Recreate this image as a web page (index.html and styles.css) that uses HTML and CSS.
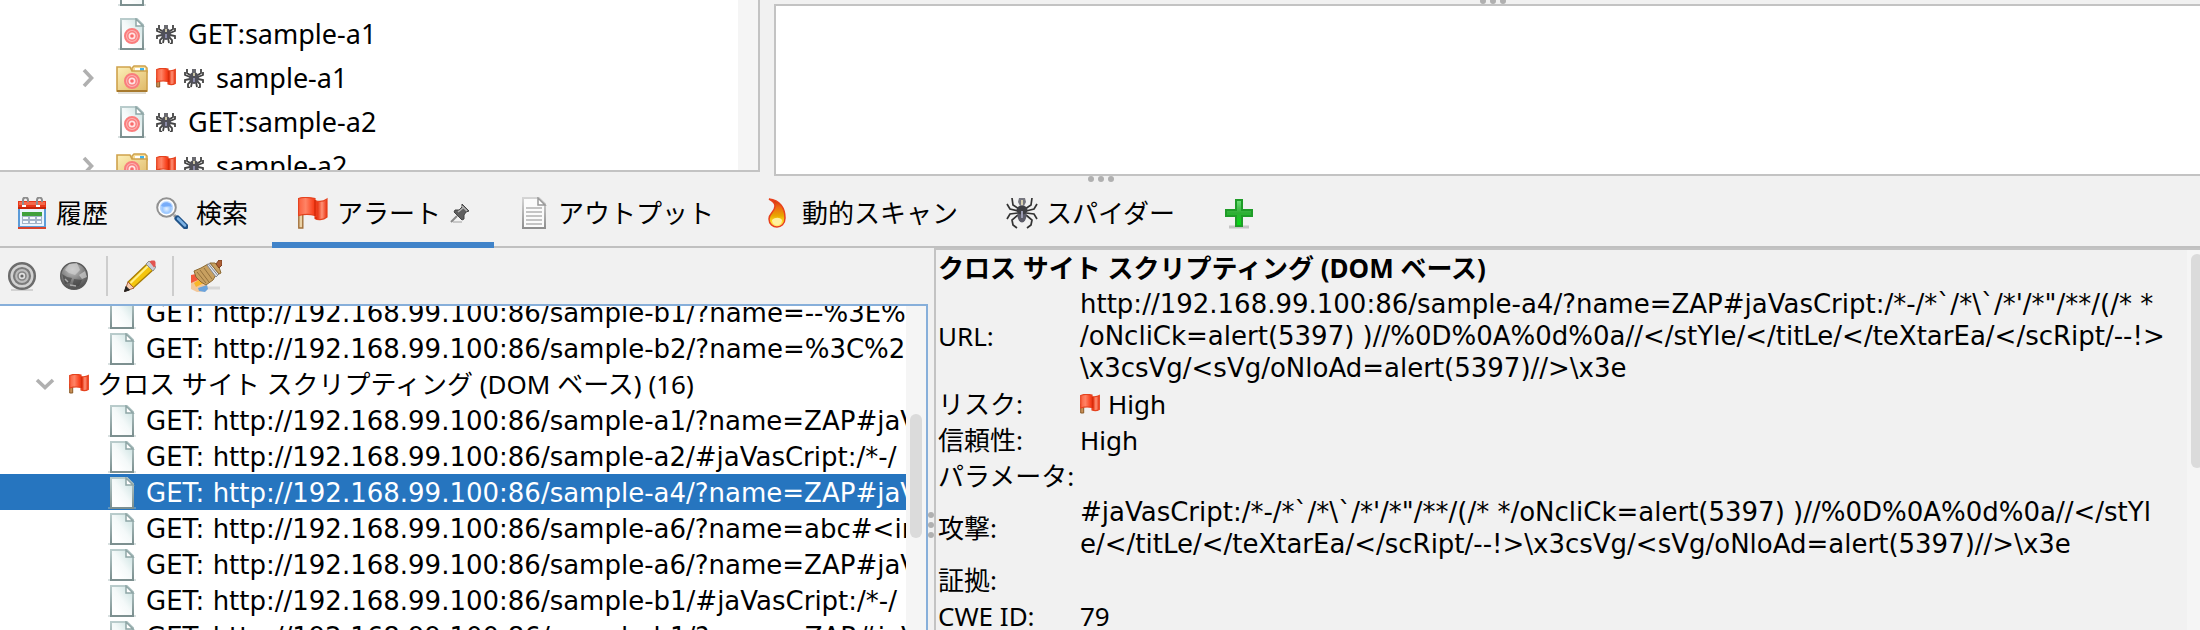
FILE: index.html
```html
<!DOCTYPE html>
<html lang="ja">
<head>
<meta charset="utf-8">
<title>アラート</title>
<link rel="stylesheet" href="styles.css">
</head>
<body>
<svg class="defs" aria-hidden="true">
  <defs>
    <linearGradient id="g-page" x1="1" y1="0" x2="0.2" y2="0.8"><stop offset="0" stop-color="#c4dedd"/><stop offset="0.6" stop-color="#f4f9f9"/><stop offset="1" stop-color="#fff"/></linearGradient>
    <linearGradient id="g-edge" x1="0" y1="0" x2="0" y2="1"><stop offset="0" stop-color="#b9cccc"/><stop offset="1" stop-color="#7a8e8e"/></linearGradient>
    <linearGradient id="g-grey" x1="0" y1="0" x2="0" y2="1"><stop offset="0" stop-color="#d4d4d4"/><stop offset="1" stop-color="#8f8f8f"/></linearGradient>
    <linearGradient id="g-folder" x1="0" y1="0" x2="1" y2="1"><stop offset="0" stop-color="#fdf0b8"/><stop offset="1" stop-color="#dfb968"/></linearGradient>
    <linearGradient id="g-flag" x1="0" y1="0" x2="1" y2="0"><stop offset="0" stop-color="#fb5f3d"/><stop offset="0.25" stop-color="#ff8466"/><stop offset="0.52" stop-color="#f9431f"/><stop offset="0.68" stop-color="#e83a18"/><stop offset="0.82" stop-color="#ff9175"/><stop offset="1" stop-color="#e9300f"/></linearGradient>
    <linearGradient id="g-fire" x1="0" y1="0" x2="0" y2="1"><stop offset="0" stop-color="#cc2a0a"/><stop offset="0.3" stop-color="#f06a12"/><stop offset="0.6" stop-color="#e8a800"/><stop offset="0.8" stop-color="#ffd820"/><stop offset="1" stop-color="#ffef8a"/></linearGradient>
    <linearGradient id="g-plus" x1="0" y1="0" x2="0" y2="1"><stop offset="0" stop-color="#6fe07a"/><stop offset="0.5" stop-color="#2fae35"/><stop offset="1" stop-color="#00e010"/></linearGradient>
    <radialGradient id="g-globe" cx="0.45" cy="0.25" r="0.8"><stop offset="0" stop-color="#c9c9c9"/><stop offset="0.5" stop-color="#858585"/><stop offset="1" stop-color="#454545"/></radialGradient>
    <radialGradient id="g-lens" cx="0.5" cy="0.6" r="0.6"><stop offset="0" stop-color="#e6f2ff"/><stop offset="0.5" stop-color="#9cc8ff"/><stop offset="1" stop-color="#d8e9ff"/></radialGradient>
  </defs>

  <symbol id="doc" viewBox="0 0 32 32">
    <path d="M2 31h28" stroke="#a9bcbc" stroke-width="2" opacity=".45"/>
    <path d="M5 1h16l6 6v24H5z" fill="url(#g-page)" stroke="url(#g-edge)" stroke-width="2"/>
    <path d="M5 31h22" stroke="#7d9090" stroke-width="2"/>
    <path d="M20 1v7h7z" fill="#fff" stroke="#8fa6a6" stroke-width="1.5"/>
  </symbol>
  <symbol id="ring" viewBox="0 0 16 16">
    <circle cx="8" cy="8" r="7" fill="#fbb3b3" stroke="#fa7d7d" stroke-width="2"/>
    <circle cx="8" cy="8" r="4.2" fill="#ffe3e3" stroke="#fa7d7d" stroke-width="1.4"/>
    <circle cx="8" cy="8" r="1.8" fill="#fa6a6a"/>
  </symbol>
  <symbol id="doc-target" viewBox="0 0 32 32">
    <use href="#doc" width="32" height="32"/><use href="#ring" x="8" y="10" width="16" height="16"/>
  </symbol>
  <symbol id="folder-target" viewBox="0 0 32 32">
    <path d="M2 31h28" stroke="#8a7a50" stroke-width="2" opacity=".25"/>
    <path d="M16 10V6l2-2h11l2 2v4z" fill="#f5dc98" stroke="#cfa24c" stroke-width="1.5"/>
    <path d="M19 6h10v3H19z" fill="#fff"/><path d="M24 6h4v3h-4z" fill="#3fb3ee"/>
    <path d="M1 5h13l2 4h15v20H1z" fill="url(#g-folder)" stroke="#cfa24c" stroke-width="1.6"/>
    <path d="M1 29h30" stroke="#a87a2e" stroke-width="2"/>
    <use href="#ring" x="8" y="11" width="16" height="16"/>
  </symbol>
  <symbol id="flag" viewBox="0 0 32 32">
    <path d="M2.800 13h4v18h-4z" fill="#ead2a6" stroke="#a2703a" stroke-width="1.4"/>
    <path d="M2.600 1.500C8-.5 13 .5 19 1.500v2c4 1.500 8 1.500 12-1.500v18c-4 3.500-10 3-12 1.500v-3c-5-1.500-11-1.500-16.400 0z" fill="url(#g-flag)" stroke="#e5431f" stroke-width="1.200"/>
    <path d="M19 3v16M20 20v2" stroke="#d92c0b" stroke-width="1.600"/>
  </symbol>
  <symbol id="flag-small" viewBox="0 0 20 20">
    <path d="M.7 10h3v9h-3z" fill="#c98f55" stroke="#8a5a28"/>
    <path d="M.7 1.500C4 0 7 0 12 1v1.500c3 .5 5 .5 7.300-1v14c-2.500 1.500-5 1.500-7.300.5v-2.500c-4-1-7-1-11.300.5z" fill="url(#g-flag)" stroke="#e5431f" stroke-width="1.200"/>
    <path d="M12.500 3v11" stroke="#d92c0b" stroke-width="1.600"/>
  </symbol>
  <symbol id="spider" viewBox="0 0 32 32">
    <g fill="none" stroke="#333" stroke-width="1.700">
      <path d="M13 12 7 8 6 1M19 12l6-4 1-7M12 14 4 12 1 7M20 14l8-2 3-5M12 16l-8 1-3 5M20 16l8 1 3 5M12 18l-6 5 1 5 4 3M20 18l6 5-1 5-4 3"/>
    </g>
    <ellipse cx="16" cy="18" rx="4.500" ry="7.500" fill="#5c5c68"/>
    <ellipse cx="16" cy="13" rx="5.500" ry="4.500" fill="#3e3e42"/>
    <path d="M13 1h6l1 4-2 4h-4l-2-4z" fill="#77777f"/>
    <path d="M15 3h2v5h-2z" fill="#d8d0b0"/>
    <path d="M15 14h2v7h-2z" fill="#9a9ab0"/>
  </symbol>
  <symbol id="spider-small" viewBox="0 0 20 20">
    <path d="M6 7 3 5V1M14 7l3-2V1M6 9 1 7V4M14 9l5-2V4M6 11l-5 1v3M14 11l5 1v3M7 13l-3 3v3l2 1M13 13l3 3v3l-2 1M8 14l-1 5M12 14l1 5" fill="none" stroke="#444" stroke-width="1.800"/>
    <ellipse cx="10" cy="10" rx="5" ry="6" fill="#505058"/>
    <path d="M8 1h4v4H8z" fill="#6b6b70"/><path d="M9 5h2v3H9z" fill="#c9c3a4"/><path d="M9 10h2v4H9z" fill="#8a8aa8"/>
  </symbol>
  <symbol id="calendar" viewBox="0 0 32 32">
    <path d="M3 9h26v21H3z" fill="#eaf4fd" stroke="#5b9bd8" stroke-width="2"/>
    <path d="M2 4h28v8H2z" fill="#e8391b"/><path d="M3 5h26v3H3z" fill="#f4694b"/><path d="M2 10h28v2H2z" fill="#c62508"/>
    <path d="M6 15h20v12H6z" fill="#a3b4c8"/><path d="M6 15h20v4H6z" fill="#3fa03c"/>
    <path d="M7 20h5v2H7zM14 20h5v2h-5zM21 20h4v2h-4zM7 24h5v2H7zM14 24h5v2h-5zM21 24h4v2h-4z" fill="#f6fafd"/>
    <path d="M2 30h28v2H2z" fill="#d8442c"/>
    <path d="M7 8V3a2.500 2.500 0 0 1 5 0v2M21 8V3a2.500 2.500 0 0 1 5 0v2" fill="none" stroke="#8d8d8d" stroke-width="2"/>
    <path d="M6 8h4v2H6zM20 8h4v2h-4z" fill="#fff"/>
  </symbol>
  <symbol id="search" viewBox="0 0 32 32">
    <path d="m18 18 4 4" stroke="#9a9a9a" stroke-width="3"/>
    <path d="m21.500 21.500 8 8" stroke="#1f5288" stroke-width="6" stroke-linecap="round"/>
    <path d="m22 21.500 7 7" stroke="#7db2e4" stroke-width="2.500" stroke-linecap="round"/>
    <circle cx="10.500" cy="10.500" r="9.300" fill="#fff" stroke="#929292" stroke-width="2"/>
    <circle cx="10.500" cy="10.500" r="6.800" fill="url(#g-lens)"/>
    <path d="M5 9c1-4 6-5 10-2l1 3c-3-2-7 1-11-1z" fill="#6ca4f8" opacity=".8"/>
  </symbol>
  <symbol id="pin" viewBox="0 0 20 20">
    <path d="M3 19h9" stroke="#bbb" stroke-width="1.500"/>
    <path d="m7 13-6 6" stroke="#888" stroke-width="2"/>
    <path d="m12 1 7 7-3 1-2 3v4l-2 1-8-8 1-2h4l3-3z" fill="#5f5f5f" stroke="#444" stroke-width="1"/>
    <path d="m8 9 5-4M12 3l5 5" stroke="#b4b4b4" stroke-width="1.600"/>
  </symbol>
  <symbol id="output" viewBox="0 0 32 32">
    <path d="M5 1h16l6 6v24H5z" fill="#fbfbfb" stroke="url(#g-grey)" stroke-width="2"/>
    <path d="M20 1v7h7z" fill="#fff" stroke="#999" stroke-width="1.500"/>
    <path d="M8 11h16M8 15h16M8 19h16M8 23h16M8 27h16" stroke="#c4c4c4" stroke-width="2"/>
  </symbol>
  <symbol id="fire" viewBox="0 0 32 32">
    <path d="M7 2c11 1 16 9 16 19 0 6-4 9-8 9s-8-3-8-8c0-6 6-7 6-13 0-3-2-5-6-7z" fill="url(#g-fire)" stroke="#e8401c" stroke-width="1.500"/>
    <path d="M10 23c3-3 8-3 10 0 0 3-2 5-5 5s-5-2-5-5z" fill="#fff0a0"/>
  </symbol>
  <symbol id="plus" viewBox="0 0 32 32">
    <path d="M6 30h20" stroke="#000" stroke-width="3" opacity=".18"/>
    <path d="M13 3h6v10h10v6H19v10h-6V19H3v-6h10z" fill="url(#g-plus)" stroke="#1f9c28" stroke-width="2"/>
  </symbol>
  <symbol id="target-grey" viewBox="0 0 32 32">
    <path d="M5 30h22" stroke="#000" stroke-width="2" opacity=".12"/>
    <circle cx="16" cy="16" r="12.800" fill="#d2d2d2" stroke="#6c6c6c" stroke-width="2.500"/>
    <circle cx="16" cy="16" r="8" fill="#bdbdbd" stroke="#7b7b7b" stroke-width="2.200"/>
    <circle cx="16" cy="16" r="4" fill="#e0e0e0" stroke="#858585" stroke-width="1.600"/>
    <circle cx="16" cy="16" r="1.600" fill="#666"/>
  </symbol>
  <symbol id="globe-grey" viewBox="0 0 32 32">
    <circle cx="16" cy="16" r="13.300" fill="url(#g-globe)" stroke="#5a5a5a" stroke-width="1.400"/>
    <path d="M11 4l8-1 3 7-5 5-6-2-4-3zM21 15l6-4 2 6-5 2z" fill="#cfcfcf" opacity=".7"/>
    <path d="M4 14l5 3 5 1-2 5-5 1zM16 19l8 1-3 6-7 1z" fill="#3f3f3f" opacity=".6"/>
    <path d="m7 19 3 3M12 25l6 1" stroke="#aaa" stroke-width="1.500"/>
  </symbol>
  <symbol id="pencil" viewBox="0 0 32 32">
    <path d="M23 4 4 22l5 6L29 10z" fill="#f4c50c" stroke="#a67b06" stroke-width="1.300"/>
    <path d="M24 6 6.500 23" stroke="#fff08a" stroke-width="2"/>
    <path d="m4 22-3.500 9.500L10 28z" fill="#f7cdb0" stroke="#a8603a" stroke-width="1"/>
    <path d="M2 26.500.5 31.500l5-1.500z" fill="#222" stroke="#222"/>
    <path d="m22 4 3-3 7 6-3 4z" fill="#c9cdd4" stroke="#8d8d8d" stroke-width="1"/>
    <path d="m25.500 1.500 2-1h3l1 1.500v4L30 7.500z" fill="#e2534f"/>
  </symbol>
  <symbol id="broom" viewBox="0 0 32 32">
    <path d="M16 28h14" stroke="#000" stroke-width="3" opacity=".1"/>
    <path d="M1 15h4l6 6 7 6-2 4-9 1-6-3z" fill="#f2c79a"/>
    <path d="M1 15l5-1 2 6-7 3z" fill="#f3593c"/><path d="M4 23l6-4 4 4-8 4z" fill="#f9b62a"/><path d="M8 28l9-3 1 4-3 3-6-1z" fill="#6ba3dc"/>
    <path d="M4 11l7-3 7-4 9 9-4 7-7 5-5-3-5-5z" fill="#c8a060" stroke="#8c6a34" stroke-width="1"/>
    <path d="M7 12l9 11M10 10l9 12M14 8l8 11" stroke="#94713c" stroke-width="1"/>
    <path d="m17 5 3-2 9 11-3 3z" fill="#dfe2e8" stroke="#84868c" stroke-width="1"/><path d="m18.500 4 9 11" stroke="#84868c" stroke-width="1"/>
    <path d="M20 3l5 0 4 4 2 6-2 1z" fill="#c8a060" stroke="#8c6a34" stroke-width="1"/>
    <path d="m26 4 3-4h3v5l-3 3z" fill="#ad6036" stroke="#7c3f1e" stroke-width="1"/>
  </symbol>
  <symbol id="chevron" viewBox="0 0 12 20">
    <path d="m2 2 7.500 8L2 18" fill="none" stroke="#b0b0b0" stroke-width="3.600"/>
  </symbol>
  <symbol id="chevron-down" viewBox="0 0 20 12">
    <path d="m2 2 8 7.500L18 2" fill="none" stroke="#b0b0b0" stroke-width="3.600"/>
  </symbol>
</svg>

<div class="app">
  <div class="upper">
    <section class="panel sites">
      <ul class="sites-tree">
        <li class="site"><span class="twisty"></span><svg class="ico"><use href="#doc-target"/></svg></li>
        <li class="site"><span class="twisty"></span><svg class="ico"><use href="#doc-target"/></svg><svg class="ico-s"><use href="#spider-small"/></svg><span class="name">GET:sample-a1</span></li>
        <li class="site"><span class="twisty"><svg class="chev"><use href="#chevron"/></svg></span><svg class="ico"><use href="#folder-target"/></svg><svg class="ico-s"><use href="#flag-small"/></svg><svg class="ico-s"><use href="#spider-small"/></svg><span class="name">sample-a1</span></li>
        <li class="site"><span class="twisty"></span><svg class="ico"><use href="#doc-target"/></svg><svg class="ico-s"><use href="#spider-small"/></svg><span class="name">GET:sample-a2</span></li>
        <li class="site"><span class="twisty"><svg class="chev"><use href="#chevron"/></svg></span><svg class="ico"><use href="#folder-target"/></svg><svg class="ico-s"><use href="#flag-small"/></svg><svg class="ico-s"><use href="#spider-small"/></svg><span class="name">sample-a2</span></li>
      </ul>
      <div class="track"></div>
    </section>
    <section class="message">
      <div class="grip grip-message"><i></i><i></i><i></i></div>
      <div class="message-body"></div>
    </section>
  </div>
  <div class="grip grip-main"><i></i><i></i><i></i></div>

  <nav class="tabs">
    <button class="tab"><svg class="ico"><use href="#calendar"/></svg>履歴</button>
    <button class="tab"><svg class="ico"><use href="#search"/></svg>検索</button>
    <button class="tab active"><svg class="ico"><use href="#flag"/></svg>アラート<svg class="ico-s"><use href="#pin"/></svg></button>
    <button class="tab"><svg class="ico"><use href="#output"/></svg>アウトプット</button>
    <button class="tab"><svg class="ico"><use href="#fire"/></svg>動的スキャン</button>
    <button class="tab"><svg class="ico"><use href="#spider"/></svg>スパイダー</button>
    <button class="tab" aria-label="追加"><svg class="ico"><use href="#plus"/></svg></button>
  </nav>

  <div class="lower">
    <section class="alerts">
      <div class="toolbar">
        <button class="tool" aria-label="スコープ"><svg class="ico"><use href="#target-grey"/></svg></button>
        <button class="tool globe" aria-label="サイト"><svg class="ico"><use href="#globe-grey"/></svg></button>
        <span class="sep"></span>
        <button class="tool" aria-label="編集"><svg class="ico"><use href="#pencil"/></svg></button>
        <span class="sep"></span>
        <button class="tool" aria-label="クリア"><svg class="ico"><use href="#broom"/></svg></button>
      </div>
      <div class="alert-box">
        <ul class="alert-tree">
          <li class="leaf"><svg class="ico"><use href="#doc"/></svg>GET: http://192.168.99.100:86/sample-b1/?name=--%3E%3</li>
          <li class="leaf"><svg class="ico"><use href="#doc"/></svg>GET: http://192.168.99.100:86/sample-b2/?name=%3C%2Fs</li>
          <li class="group"><svg class="chev-down"><use href="#chevron-down"/></svg><svg class="ico-s"><use href="#flag-small"/></svg>クロス サイト スクリプティング (DOM ベース) (16)</li>
          <li class="leaf"><svg class="ico"><use href="#doc"/></svg>GET: http://192.168.99.100:86/sample-a1/?name=ZAP#jaVa</li>
          <li class="leaf"><svg class="ico"><use href="#doc"/></svg>GET: http://192.168.99.100:86/sample-a2/#jaVasCript:/*-/</li>
          <li class="leaf selected"><svg class="ico"><use href="#doc"/></svg>GET: http://192.168.99.100:86/sample-a4/?name=ZAP#jaVa</li>
          <li class="leaf"><svg class="ico"><use href="#doc"/></svg>GET: http://192.168.99.100:86/sample-a6/?name=abc#&lt;im</li>
          <li class="leaf"><svg class="ico"><use href="#doc"/></svg>GET: http://192.168.99.100:86/sample-a6/?name=ZAP#jaVa</li>
          <li class="leaf"><svg class="ico"><use href="#doc"/></svg>GET: http://192.168.99.100:86/sample-b1/#jaVasCript:/*-/</li>
          <li class="leaf"><svg class="ico"><use href="#doc"/></svg>GET: http://192.168.99.100:86/sample-b1/?name=ZAP#jaVa</li>
        </ul>
        <div class="track"><div class="thumb"></div></div>
      </div>
    </section>
    <div class="grip grip-v"><i></i><i></i><i></i></div>
    <section class="detail">
      <div class="detail-body">
        <h2 class="detail-title">クロス サイト スクリプティング (DOM ベース)</h2>
        <table class="facts">
          <tr><th scope="row">URL:</th><td class="code">http://192.168.99.100:86/sample-a4/?name=ZAP#jaVasCript:/*-/*`/*\`/*'/*"/**/(/* *<br>/oNcliCk=alert(5397) )//%0D%0A%0d%0a//&lt;/stYle/&lt;/titLe/&lt;/teXtarEa/&lt;/scRipt/--!&gt;<br>\x3csVg/&lt;sVg/oNloAd=alert(5397)//&gt;\x3e</td></tr>
          <tr><th scope="row">リスク:</th><td><span class="risk"><svg class="ico-s"><use href="#flag-small"/></svg>High</span></td></tr>
          <tr><th scope="row">信頼性:</th><td>High</td></tr>
          <tr><th scope="row">パラメータ:</th><td></td></tr>
          <tr><th scope="row">攻撃:</th><td class="code">#jaVasCript:/*-/*`/*\`/*'/*"/**/(/* */oNcliCk=alert(5397) )//%0D%0A%0d%0a//&lt;/stYl<br>e/&lt;/titLe/&lt;/teXtarEa/&lt;/scRipt/--!&gt;\x3csVg/&lt;sVg/oNloAd=alert(5397)//&gt;\x3e</td></tr>
          <tr><th scope="row">証拠:</th><td></td></tr>
          <tr><th scope="row">CWE ID:</th><td>79</td></tr>
        </table>
      </div>
      <div class="track"><div class="thumb"></div></div>
    </section>
  </div>
</div>
</body>
</html>
```
FILE: styles.css
```css
* { box-sizing: border-box; }

body {
  margin: 0;
  background: #f1f1f1;
  color: #000;
  font: 26px/32px "Noto Sans", "Noto Sans CJK JP", sans-serif;
}

ul { list-style: none; margin: 0; padding: 0; }

button {
  font: inherit;
  color: inherit;
  background: none;
  border: 0;
  padding: 0;
}

.defs { position: absolute; width: 0; height: 0; }
.ico { width: 32px; height: 32px; flex: none; display: block; }
.ico-s { width: 20px; height: 20px; flex: none; display: block; }

.app {
  height: 100vh;
  display: flex;
  flex-direction: column;
  overflow: hidden;
}

/* Upper panes */
.upper {
  flex: none;
  height: 176px;
  display: grid;
  grid-template-columns: minmax(0, 760fr) minmax(0, 1426fr);
  column-gap: 14px;
}

.panel {
  display: flex;
  margin-bottom: 4px;
  background: #fff;
  border: solid #c3c3c3;
  border-width: 0 2px 2px 0;
  overflow: hidden;
}

.sites-tree { flex: 1; margin-top: -32px; }
.site {
  height: 44px;
  padding-left: 82px;
  display: flex;
  align-items: center;
  gap: 8px;
  font-size: 27px;
}
.twisty { width: 26px; flex: none; }
.chev { width: 12px; height: 20px; display: block; }
.name { padding-left: 4px; }

.track { flex: 0 0 20px; background: #f5f5f5; }
.thumb { width: 12px; margin: 0 4px; border-radius: 6px; background: #dbdbdb; }

.message { display: flex; flex-direction: column; }
.message-body {
  flex: 1;
  background: #fff;
  border: 2px solid #c3c3c3;
  border-right: 0;
}

/* Splitter handles */
.grip {
  display: flex;
  justify-content: center;
  gap: 4px;
  height: 4px;
  flex: none;
  overflow: hidden;
  align-items: flex-end;
}
.grip i { width: 6px; height: 6px; border-radius: 50%; background: #b0b0b0; flex: none; }
.grip-message { padding-left: 12px; }
.grip-main { height: 6px; padding-left: 2px; }

/* Tabs */
.tabs {
  flex: none;
  display: flex;
  height: 66px;
  padding-right: 8px;
  border-bottom: 2px solid #c0c0c0;
}
.tab {
  height: 66px;
  padding: 2px 24px 0;
  display: flex;
  align-items: center;
  gap: 8px;
  border-bottom: 6px solid transparent;
}
.tab:first-child { padding-left: 16px; }
.tab.active { gap: 9px; border-bottom-color: #4083c9; }

/* Lower panes */
.lower {
  flex: 1;
  min-height: 0;
  display: grid;
  grid-template-columns: minmax(0, 928fr) 6px minmax(0, 1266fr);
}

.alerts { display: flex; flex-direction: column; min-height: 0; }
.toolbar {
  flex: none;
  height: 56px;
  padding-left: 6px;
  display: flex;
  align-items: center;
  gap: 16px;
}
.globe { padding-left: 4px; }
.sep { width: 2px; height: 40px; background: #cdcdcd; }

.alert-box {
  flex: 1;
  min-height: 0;
  display: flex;
  background: #fff;
  border: solid #87afda;
  border-width: 2px 2px 0 0;
  overflow: hidden;
}
.alert-tree { flex: 1; min-width: 0; margin-top: -12px; overflow: hidden; }
.alert-box .thumb { height: 124px; margin-top: 108px; }

.leaf, .group {
  height: 36px;
  display: flex;
  align-items: center;
  gap: 8px;
  white-space: nowrap;
}
.leaf { padding: 2px 0 0 106px; font-family: "DejaVu Sans", sans-serif; }
.group { padding-left: 35px; }
.chev-down { width: 20px; height: 12px; margin-right: 6px; flex: none; }
.selected { background: #2675bf; color: #fff; }

.grip-v {
  height: auto;
  flex-direction: column;
  align-items: center;
  padding-top: 172px;
  justify-content: center;
}

.detail {
  display: flex;
  min-height: 0;
  overflow: hidden;
  border: solid #c3c3c3;
  border-width: 2px 0 0 2px;
}
.detail-body { flex: 1; min-width: 0; padding-left: 2px; }
.detail .track { flex-basis: 13px; overflow: hidden; }
.detail .thumb { height: 214px; margin-top: 4px; }

.detail-title {
  margin: 0;
  padding: 2px 0;
  font-size: 26px;
  line-height: 32px;
  font-weight: 700;
  white-space: nowrap;
}
.facts { width: 100%; border-collapse: collapse; }
.facts th, .facts td { padding: 2px 0; text-align: left; vertical-align: middle; font-weight: 400; height: 36px; }
.facts th { width: 142px; white-space: nowrap; }
.facts .code { font-family: "DejaVu Sans", sans-serif; white-space: nowrap; }
.risk { display: flex; align-items: center; gap: 8px; }
```
